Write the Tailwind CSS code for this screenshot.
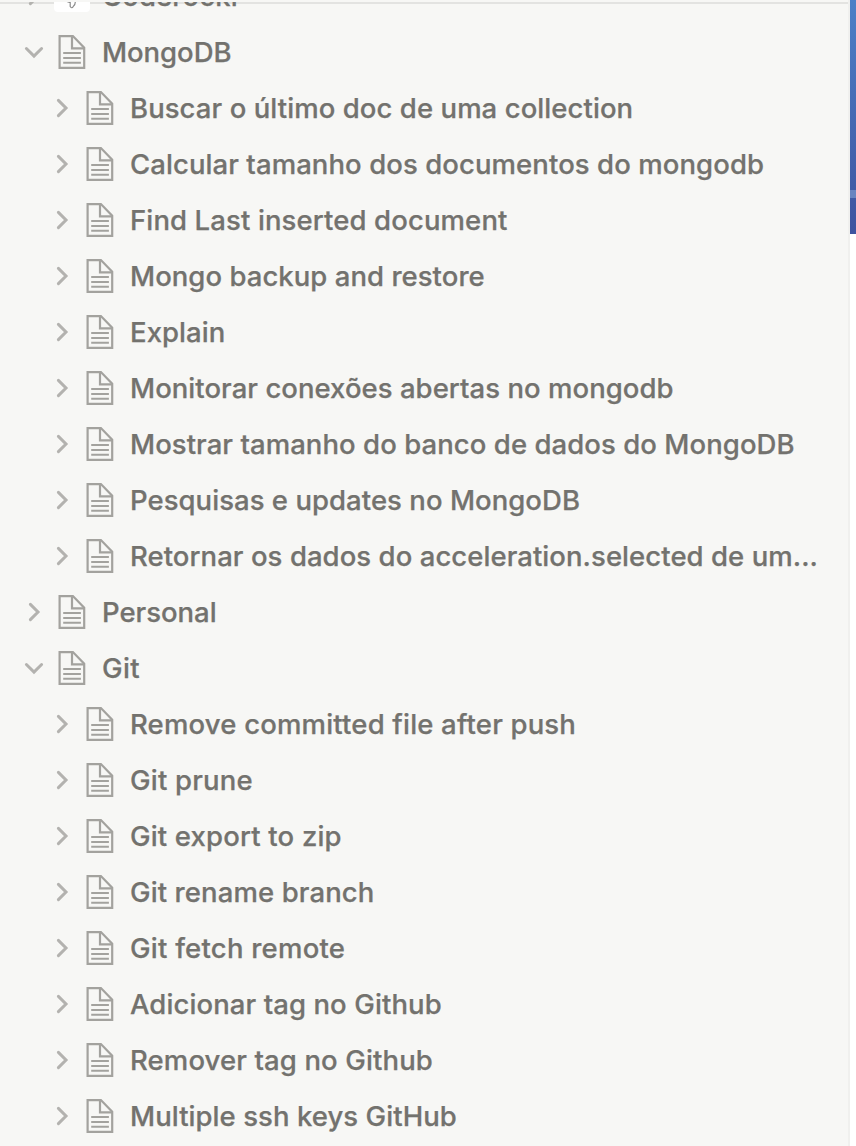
<!DOCTYPE html>
<html lang="pt-BR">
<head>
<meta charset="utf-8">
<title>Sidebar</title>
<script src="https://cdn.jsdelivr.net/npm/@tailwindcss/browser@4"></script>
</head>
<body class="bg-white">
<svg class="hidden">
  <symbol id="doc" viewBox="0 0 28 34"><g fill="none" stroke="#a3a29e" stroke-width="2.2"><path d="M1.6 1.1H14.9L26.2 12.8V32.9H1.6Z"/><path d="M14 1.1V13.4H26.2"/><path d="M5.2 17.9H22.9M5.2 22.9H22.9M5.2 27.8H22.9" stroke-width="2"/></g></symbol>
  <symbol id="right" viewBox="0 0 20 20"><path d="M6.4 2.4L14 10L6.4 17.6" fill="none" stroke="#b3b2af" stroke-width="3" stroke-linecap="round"/></symbol>
  <symbol id="down" viewBox="0 0 20 20"><path d="M2.4 6.5L10 14.1L17.6 6.5" fill="none" stroke="#b3b2af" stroke-width="3" stroke-linecap="round"/></symbol>
</svg>
<div class="flex h-[1146px] w-[856px] overflow-hidden">
  <aside class="w-[850px] shrink-0 border-r-2 border-[#f0f0ee] bg-[#f7f7f5] pt-0.5 font-['Inter',sans-serif] text-[27.5px] leading-[56px] font-medium text-[#73726e] [-webkit-text-stroke:0.25px_#73726e]">
    <div id="tree" class="h-[1144px] overflow-hidden shadow-[inset_0_2px_0_#e3e3e1]">
      <div class="flex h-[22px] items-end">
        <div class="flex h-14 items-center pl-6">
          <svg class="size-5"><use href="#right"/></svg>
          <div class="mb-1 ml-2.5 flex size-9 shrink-0 items-end justify-center rounded bg-white pb-[3px]">
            <svg class="h-3 w-3" viewBox="0 0 12 12" fill="none" stroke="#8c8c8c" stroke-width="1.2"><path d="M1 4.5Q3 5.5 4.2 5.6V9.5Q6 12 7.2 9.5Q9.5 8 9.3 4"/></svg>
          </div>
          <span class="ml-3 tracking-[0.1px]">Coderocki</span>
        </div>
      </div>
    </div>
  </aside>
  <div class="h-[234px] w-1.5 bg-linear-to-b from-[#4d80c7] to-[#3e539f] pt-[190px]">
    <div class="h-2 bg-[#6984c0]"></div>
  </div>
</div>
<script>
const rows = [
  ["MongoDB", "tracking-[-0.05px]", "down", 0],
  ["Buscar o último doc de uma collection", "tracking-[0.07px]", "right", 1],
  ["Calcular tamanho dos documentos do mongodb", "tracking-[0.08px]", "right", 1],
  ["Find Last inserted document", "tracking-[0.12px]", "right", 1],
  ["Mongo backup and restore", "tracking-[0.04px]", "right", 1],
  ["Explain", "tracking-[0.05px]", "right", 1],
  ["Monitorar conexões abertas no mongodb", "tracking-[0.04px]", "right", 1],
  ["Mostrar tamanho do banco de dados do MongoDB", "tracking-[0.06px]", "right", 1],
  ["Pesquisas e updates no MongoDB", "tracking-[0.04px]", "right", 1],
  ["Retornar os dados do acceleration.selected de um...", "tracking-[0.06px]", "right", 1],
  ["Personal", "tracking-[-0.02px]", "right", 0],
  ["Git", "tracking-[0.4px]", "down", 0],
  ["Remove committed file after push", "tracking-[0.18px]", "right", 1],
  ["Git prune", "tracking-[0.2px]", "right", 1],
  ["Git export to zip", "tracking-[0.17px]", "right", 1],
  ["Git rename branch", "tracking-[0.11px]", "right", 1],
  ["Git fetch remote", "tracking-[0.24px]", "right", 1],
  ["Adicionar tag no Github", "tracking-[0.09px]", "right", 1],
  ["Remover tag no Github", "tracking-[0.12px]", "right", 1],
  ["Multiple ssh keys GitHub", "tracking-[0.06px]", "right", 1]
];
document.getElementById("tree").insertAdjacentHTML("beforeend", rows.map(([name, tracking, chevron, level]) => `
  <div class="flex h-14 items-center ${level ? "pl-[52px]" : "pl-6"}">
    <svg class="size-5 shrink-0"><use href="#${chevron}"/></svg>
    <svg class="ml-3.5 h-[34px] w-7 shrink-0"><use href="#doc"/></svg>
    <span class="ml-4 whitespace-nowrap ${tracking}">${name}</span>
  </div>`).join(""));
</script>
</body>
</html>
